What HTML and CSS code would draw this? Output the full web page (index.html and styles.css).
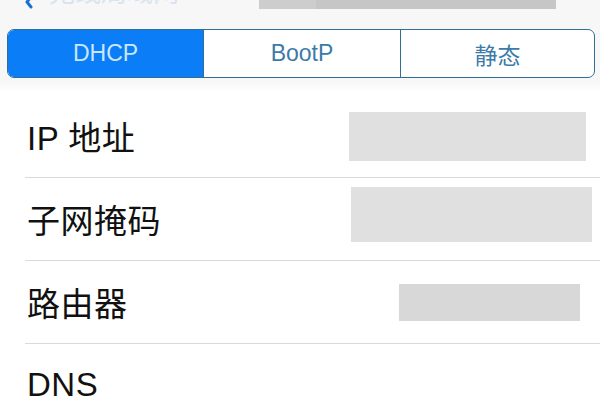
FILE: index.html
```html
<!DOCTYPE html>
<html lang="zh-CN">
<head>
<meta charset="utf-8">
<title>Wi-Fi 设置</title>
<link rel="stylesheet" href="styles.css">
</head>
<body>
<div class="screen">
  <header class="navbar">
    <div class="back">
      <svg class="chevron" width="10" height="10" viewBox="0 0 10 10"><path d="M8 -6 L2 2 L6 7" fill="none" stroke="#1a6fd8" stroke-width="3" stroke-linecap="round" stroke-linejoin="round"/></svg>
      <span class="back-text">无线局域网</span>
    </div>
    <div class="title-mask"><span class="mask-left"></span></div>
  </header>

  <div class="segment-wrap">
    <div class="segment">
      <div class="seg seg-active">DHCP</div>
      <div class="seg">BootP</div>
      <div class="seg">静态</div>
    </div>
  </div>

  <ul class="list">
    <li class="row">
      <span class="label">IP 地址</span>
      <span class="value value-ip"></span>
    </li>
    <li class="row">
      <span class="label">子网掩码</span>
      <span class="value value-mask"></span>
    </li>
    <li class="row">
      <span class="label">路由器</span>
      <span class="value value-router"></span>
    </li>
    <li class="row row-last">
      <span class="label">DNS</span>
    </li>
  </ul>
</div>
</body>
</html>
```

FILE: styles.css
```css
html, body {
  margin: 0;
  padding: 0;
  background: #ffffff;
}

body {
  font-family: "Liberation Sans", "Noto Sans CJK SC", sans-serif;
  color: #111111;
}

.screen {
  width: 600px;
  height: 400px;
  overflow: hidden;
  background: #ffffff;
}

.navbar {
  height: 10px;
  background: #f7f7f7;
  display: flex;
  align-items: flex-start;
  overflow: hidden;
}

.back {
  display: flex;
  align-items: flex-start;
  margin-left: 25px;
  width: 234px;
  height: 10px;
  overflow: hidden;
}

.chevron {
  display: block;
}

.back-text {
  margin-left: 14px;
  margin-top: -22px;
  font-size: 26px;
  line-height: 30px;
  color: #d8e4f0;
}

.title-mask {
  display: flex;
  width: 297px;
  height: 9px;
  background: #c6c6c6;
}

.mask-left {
  width: 57px;
  height: 9px;
  background: #cdcdcd;
}

.segment-wrap {
  padding: 19px 5px 17px 7px;
  background: linear-gradient(#f7f7f7 0, #f7f7f7 72px, #ffffff 82px);
}

.segment {
  display: grid;
  grid-template-columns: 195px 197px 1fr;
  height: 49px;
  box-sizing: border-box;
  border: 1.5px solid #2f6f93;
  border-radius: 7px;
  overflow: hidden;
  background: #ffffff;
}

.seg {
  display: flex;
  align-items: center;
  justify-content: center;
  font-size: 23px;
  color: #3c7ba7;
  border-left: 1.5px solid #2f6f93;
}

.seg:first-child {
  border-left: none;
}

.seg-active {
  background: #0a7df7;
  color: #c9e7ff;
}

.list {
  list-style: none;
  margin: 0;
  padding: 0;
}

.row {
  display: flex;
  align-items: center;
  height: 82px;
  margin-left: 25px;
  padding-left: 2px;
  border-bottom: 1.5px solid #dadada;
}

.label {
  font-size: 33px;
  color: #111111;
  letter-spacing: 0.5px;
}

.value {
  margin-left: auto;
  background: #e0e0e0;
}

.value-ip {
  width: 237px;
  height: 49px;
  margin-right: 14px;
}

.value-mask {
  width: 241px;
  height: 55px;
  margin-right: 8px;
  margin-bottom: 9px;
}

.value-router {
  width: 181px;
  height: 37px;
  margin-right: 20px;
  background: #d8d8d8;
}

.row-last {
  height: 54px;
  align-items: flex-end;
  border-bottom: none;
}

.row-last .label {
  line-height: 26px;
}
```
